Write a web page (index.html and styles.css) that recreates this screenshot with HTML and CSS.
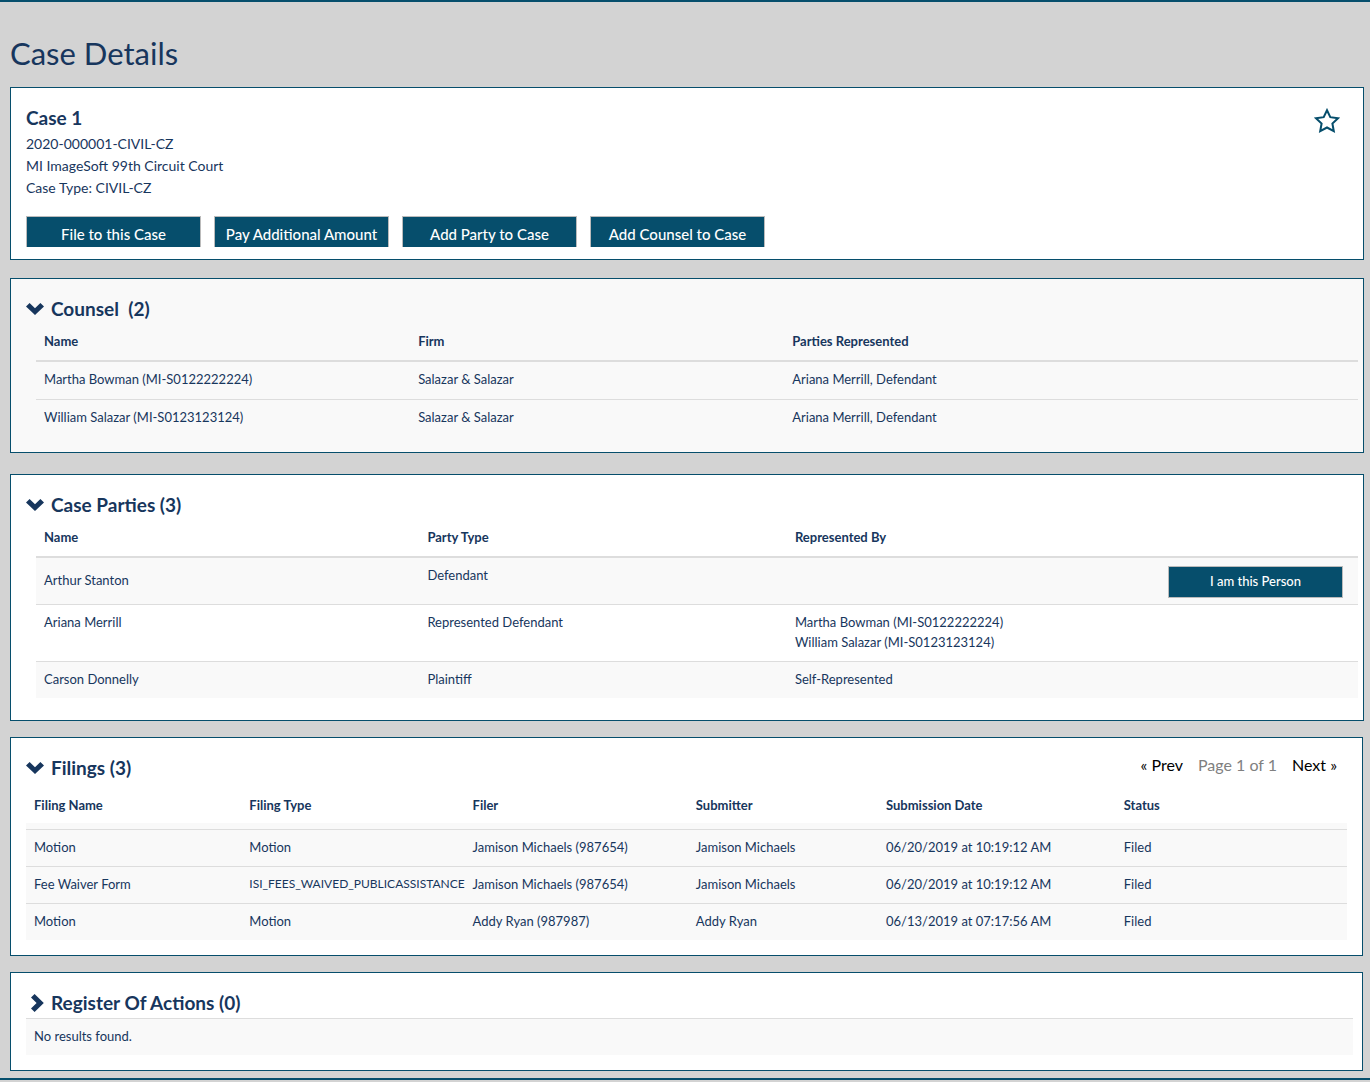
FILE: index.html
```html
<!DOCTYPE html>
<html lang="en">
<head>
    <meta charset="UTF-8">
    <meta name="viewport" content="width=device-width, initial-scale=1.0">
    <title>Case Details</title>
    <link rel="stylesheet" href="styles.css">
</head>
<body>
    <main class="page">
        <h1>Case Details</h1>

        <section class="card case">
            <div class="case-top">
                <div>
                    <h2 class="case-title">Case 1</h2>
                    <p>2020-000001-CIVIL-CZ</p>
                    <p>MI ImageSoft 99th Circuit Court</p>
                    <p>Case Type: CIVIL-CZ</p>
                </div>
                <button class="star" type="button" aria-label="Add to favorites">
                    <svg width="26" height="26" viewBox="0 0 26 26"><path d="M13 2.2L16.3 9.2L24 10.2L18.4 15.5L19.8 23.2L13 19.5L6.2 23.2L7.6 15.5L2 10.2L9.7 9.2Z"/></svg>
                </button>
            </div>
            <div class="actions">
                <button class="btn" type="button">File to this Case</button>
                <button class="btn" type="button">Pay Additional Amount</button>
                <button class="btn" type="button">Add Party to Case</button>
                <button class="btn" type="button">Add Counsel to Case</button>
            </div>
        </section>

        <section class="card counsel">
            <h2><button class="toggle" type="button" aria-expanded="true">
                <svg class="chevron" width="18" height="12" viewBox="0 0 18 12"><path d="M0 3.6L3.6 0L9 5.2L14.4 0L18 3.6L9 12Z"/></svg>
                <span>Counsel &nbsp;(2)</span>
            </button></h2>
            <table class="inset">
                <colgroup>
                    <col class="counsel-name">
                    <col class="counsel-firm">
                    <col>
                </colgroup>
                <thead>
                    <tr><th>Name</th><th>Firm</th><th>Parties Represented</th></tr>
                </thead>
                <tbody>
                    <tr><td>Martha Bowman (MI-S0122222224)</td><td>Salazar &amp; Salazar</td><td>Ariana Merrill, Defendant</td></tr>
                    <tr><td>William Salazar (MI-S0123123124)</td><td>Salazar &amp; Salazar</td><td>Ariana Merrill, Defendant</td></tr>
                </tbody>
            </table>
        </section>

        <section class="card parties">
            <h2><button class="toggle" type="button" aria-expanded="true">
                <svg class="chevron" width="18" height="12" viewBox="0 0 18 12"><path d="M0 3.6L3.6 0L9 5.2L14.4 0L18 3.6L9 12Z"/></svg>
                <span>Case Parties (3)</span>
            </button></h2>
            <table class="inset striped">
                <colgroup>
                    <col class="party-name">
                    <col class="party-type">
                    <col class="party-rep">
                    <col>
                </colgroup>
                <thead>
                    <tr><th>Name</th><th>Party Type</th><th>Represented By</th><th></th></tr>
                </thead>
                <tbody>
                    <tr>
                        <td class="middle">Arthur Stanton</td>
                        <td>Defendant</td>
                        <td></td>
                        <td class="claim"><button class="btn btn-small" type="button">I am this Person</button></td>
                    </tr>
                    <tr>
                        <td>Ariana Merrill</td>
                        <td>Represented Defendant</td>
                        <td>Martha Bowman (MI-S0122222224)<br>William Salazar (MI-S0123123124)</td>
                        <td></td>
                    </tr>
                    <tr>
                        <td>Carson Donnelly</td>
                        <td>Plaintiff</td>
                        <td>Self-Represented</td>
                        <td></td>
                    </tr>
                </tbody>
            </table>
        </section>

        <section class="card filings">
            <div class="filings-head">
                <h2><button class="toggle" type="button" aria-expanded="true">
                    <svg class="chevron" width="18" height="12" viewBox="0 0 18 12"><path d="M0 3.6L3.6 0L9 5.2L14.4 0L18 3.6L9 12Z"/></svg>
                    <span>Filings (3)</span>
                </button></h2>
                <nav class="pager">
                    <a href="#">« Prev</a>
                    <span>Page 1 of 1</span>
                    <a href="#">Next »</a>
                </nav>
            </div>
            <table>
                <colgroup>
                    <col class="filing-name">
                    <col class="filing-type">
                    <col class="filing-filer">
                    <col class="filing-submitter">
                    <col class="filing-date">
                    <col>
                </colgroup>
                <thead>
                    <tr><th>Filing Name</th><th>Filing Type</th><th>Filer</th><th>Submitter</th><th>Submission Date</th><th>Status</th></tr>
                </thead>
                <tbody>
                    <tr class="spacer"><td colspan="6"></td></tr>
                    <tr><td>Motion</td><td>Motion</td><td>Jamison Michaels (987654)</td><td>Jamison Michaels</td><td>06/20/2019 at 10:19:12 AM</td><td>Filed</td></tr>
                    <tr><td>Fee Waiver Form</td><td class="code">ISI_FEES_WAIVED_PUBLICASSISTANCE</td><td>Jamison Michaels (987654)</td><td>Jamison Michaels</td><td>06/20/2019 at 10:19:12 AM</td><td>Filed</td></tr>
                    <tr><td>Motion</td><td>Motion</td><td>Addy Ryan (987987)</td><td>Addy Ryan</td><td>06/13/2019 at 07:17:56 AM</td><td>Filed</td></tr>
                </tbody>
            </table>
        </section>

        <section class="card register">
            <h2><button class="toggle" type="button" aria-expanded="false">
                <svg class="chevron" width="18" height="18" viewBox="-5 0 18 18"><path d="M3.6 0L12.8 9L3.6 18L0 14.4L5.6 9L0 3.6Z"/></svg>
                <span>Register Of Actions (0)</span>
            </button></h2>
            <p class="empty">No results found.</p>
        </section>
    </main>
</body>
</html>
```
FILE: styles.css
```css
* {
    box-sizing: border-box;
}

body {
    margin: 0;
    background-color: #d3d3d3;
    color: #17365d;
    font-family: Lato, 'Liberation Sans', sans-serif;
    font-size: 13px;
    line-height: 20px;
}

.page {
    border-top: 2px solid #064e6c;
    border-bottom: 2px solid #064e6c;
    padding: 30px 6px 7px 10px;
}

h1, h2, p {
    margin: 0;
}

h1 {
    font-size: 31px;
    font-weight: 400;
    line-height: 42px;
    margin-bottom: 13px;
}

h2 {
    font-size: 19px;
    font-weight: 700;
    line-height: 24px;
}

.card {
    background-color: #fff;
    border: 1px solid #064e6c;
    padding: 18px 15px;
    margin-bottom: 16px;
}

.case {
    padding: 18px 15px 12px;
    margin-bottom: 18px;
}

.case-top {
    display: flex;
    justify-content: space-between;
    align-items: flex-start;
}

.case-title {
    margin-bottom: 3px;
}

.case p {
    font-size: 14px;
    line-height: 22px;
}

.star {
    background: none;
    border: 0;
    padding: 0;
    margin: 2px 8px 0 0;
    line-height: 0;
    cursor: pointer;
}

.star path {
    fill: none;
    stroke: #064e6c;
    stroke-width: 2;
}

.actions {
    display: flex;
    flex-wrap: wrap;
    gap: 13px;
    margin-top: 17px;
}

.btn {
    width: 175px;
    height: 31px;
    background-color: #064e6c;
    color: #fff;
    border: 1px solid #bbb;
    border-bottom: 0;
    padding: 3px 0 0;
    font-family: inherit;
    font-size: 15px;
    font-weight: 500;
    cursor: pointer;
}

.btn-small {
    height: 32px;
    border-bottom: 1px solid #bbb;
    padding: 0 0 2px;
    font-size: 13px;
}

.toggle {
    display: flex;
    align-items: center;
    gap: 7px;
    background: none;
    border: 0;
    padding: 0;
    color: inherit;
    font: inherit;
    cursor: pointer;
}

.chevron {
    fill: #17365d;
}

table {
    width: 100%;
    border-collapse: separate;
    border-spacing: 0;
    table-layout: fixed;
}

th, td {
    text-align: left;
    vertical-align: top;
    white-space: nowrap;
}

th {
    font-weight: 700;
}

td {
    padding: 7px 0 9px 8px;
    border-top: 1px solid #ddd;
}

.inset th {
    padding: 10px 0 9px 8px;
    border-bottom: 2px solid #ddd;
}

.inset tbody tr:first-child td {
    border-top: 0;
}

/* Counsel */
.counsel {
    background-color: #f9f9f9;
    padding: 18px 5px 15px 15px;
    margin-bottom: 21px;
}

.inset {
    width: calc(100% - 10px);
    margin-left: 10px;
}

.counsel td {
    padding-bottom: 10px;
}

.counsel-name, .counsel-firm {
    width: 28.3%;
}

/* Parties */
.parties {
    padding: 18px 5px 22px 15px;
}

.striped tbody tr:nth-child(odd) td {
    background-color: #f9f9f9;
}

.party-name {
    width: 29%;
}

.party-type {
    width: 27.8%;
}

.party-rep {
    width: 26%;
}

td.middle {
    vertical-align: middle;
}

td.claim {
    text-align: right;
    padding: 8px 15px 6px 0;
    line-height: 0;
}

/* Filings */
.filings {
    padding: 18px 15px 15px;
    margin-right: 1px;
}

.filings-head {
    display: flex;
    justify-content: space-between;
    align-items: flex-start;
}

.pager {
    display: flex;
    gap: 15px;
    margin-right: 10px;
    font-size: 16px;
    line-height: 18px;
    color: #808080;
}

.pager a {
    color: #000;
    text-decoration: none;
}

.filings th {
    padding: 15px 0 8px 8px;
}

.filings tbody tr {
    background-color: #f9f9f9;
}

.filings .spacer td {
    height: 6px;
    padding: 0;
    border: 0;
}

.filings .code {
    font-size: 12px;
}

.filing-name {
    width: 16.3%;
}

.filing-type, .filing-filer {
    width: 16.9%;
}

.filing-submitter {
    width: 14.4%;
}

.filing-date {
    width: 18%;
}

/* Register of actions */
.register {
    padding: 18px 9px 15px 15px;
    margin: 0 1px 0 0;
}

.empty {
    margin-top: 3px;
    padding: 7px 8px 9px;
    border-top: 1px solid #ddd;
    background-color: #f9f9f9;
}
```
